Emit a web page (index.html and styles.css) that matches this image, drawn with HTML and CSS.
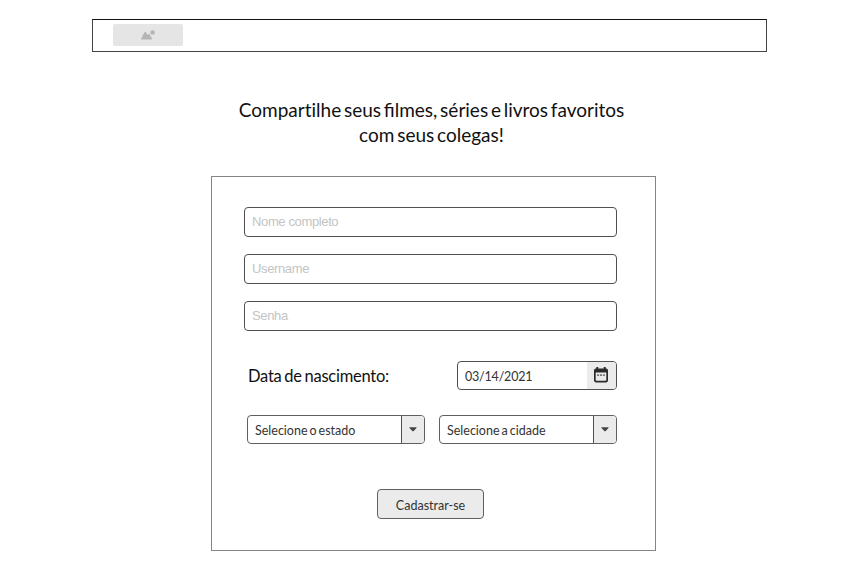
FILE: index.html
```html
<!DOCTYPE html>
<html lang="pt-BR">
<head>
<meta charset="utf-8">
<title>Cadastro</title>
<link rel="stylesheet" href="styles.css">
</head>
<body>
<header class="topbar">
  <div class="logo">
    <svg width="14" height="10" viewBox="0 0 14 10"><path d="M.8 9.6Q-.1 9.6.2 8.6L3.4 2.4Q4.2 1.2 5 2.4L6.6 5l.9-.9Q8 3.7 8.5 4.3l2.4 4.2q.4 1.1-.5 1.1z"/><circle cx="11.6" cy="2.5" r="2.3"/></svg>
  </div>
</header>
<main>
  <h1><span class="plain">Compartilhe</span> seus filmes, séries e livros favoritos<br>com seus colegas!</h1>
  <form class="card">
    <input class="field" type="text" placeholder="Nome completo">
    <input class="field" type="text" placeholder="Username">
    <input class="field" type="password" placeholder="Senha">
    <div class="birth">
      <span class="label">Data de nascimento:</span>
      <div class="control date">
        <span class="value">03/14/2021</span>
        <span class="addon">
          <svg width="14" height="16" viewBox="0 0 14 16"><path class="ink" fill-rule="evenodd" d="M2.3 0h2v1.6h5.4V0h2v1.6h.5Q14 1.6 14 3.4v10.2q0 1.8-1.8 1.8H1.8Q0 15.4 0 13.6V3.4q0-1.8 1.8-1.8h.5zM1.7 5.6v7.3q0 .8.8.8h9q.8 0 .8-.8V5.6z"/><path class="dots" d="M3.1 7.3h2v1.6h-2zM6 7.3h2v1.6H6zM8.9 7.3h2v1.6h-2z"/></svg>
        </span>
      </div>
    </div>
    <div class="places">
      <div class="control select"><span class="value">Selecione o estado</span><span class="addon"><svg width="8" height="5" viewBox="0 0 8 5"><path class="arrow" d="M.8.2h6.4q.8 0 .3.7L4.7 4q-.7.7-1.4 0L.5.9Q0 .2.8.2z"/></svg></span></div>
      <div class="control select"><span class="value">Selecione a cidade</span><span class="addon"><svg width="8" height="5" viewBox="0 0 8 5"><path class="arrow" d="M.8.2h6.4q.8 0 .3.7L4.7 4q-.7.7-1.4 0L.5.9Q0 .2.8.2z"/></svg></span></div>
    </div>
    <button class="submit" type="button">Cadastrar-se</button>
  </form>
</main>
</body>
</html>
```
FILE: styles.css
```css
* { box-sizing: border-box; }
body {
  margin: 0;
  height: 566px;
  overflow: hidden;
  background: #fff;
  color: #111;
  font-family: Lato, sans-serif;
}
svg { display: block; }
.topbar {
  width: 675px;
  height: 33px;
  margin: 19px 0 0 92px;
  padding: 4px 20px;
  border: 1px solid #444;
  border-top-color: #111;
}
.logo {
  display: flex;
  align-items: center;
  justify-content: center;
  width: 70px;
  height: 22px;
  border-radius: 2px;
  background: #e5e5e5;
  fill: #b5b5b5;
}
main {
  width: 445px;
  margin: 45px 0 0 211px;
}
h1 {
  margin: 0 0 29px;
  padding-right: 4px;
  font-size: 19px;
  font-weight: 400;
  line-height: 25px;
  height: 50px;
  word-spacing: -2.1px;
  text-align: center;
  white-space: nowrap;
}
.plain { font-variant-ligatures: none; }
.card {
  display: flex;
  flex-direction: column;
  height: 375px;
  padding: 30px 38px 0 32px;
  border: 1px solid #858585;
}
.field {
  width: 373px;
  height: 30px;
  margin: 0 0 17px;
  padding: 0 7px 1px;
  border: 1px solid #505050;
  border-radius: 4px;
  background: #fff;
  font: 13px/20px "Liberation Sans", Arial, sans-serif;
  letter-spacing: -.37px;
}
.field::placeholder { color: #c4c4c4; opacity: 1; }
.birth {
  display: flex;
  align-items: center;
  justify-content: space-between;
  margin-top: 13px;
  padding-left: 4px;
}
.label { padding-top: 1px; font-size: 16.5px; line-height: 28px; letter-spacing: -.25px; word-spacing: -1.2px; }
.control {
  display: flex;
  height: 29px;
  overflow: hidden;
  border: 1px solid #505050;
  border-radius: 4px;
  color: #333;
  font-size: 12.5px;
  word-spacing: -1.2px;
}
.value {
  flex: 1;
  padding: 1px 0 0 7px;
  line-height: 27px;
  white-space: nowrap;
}
.addon {
  display: flex;
  align-items: center;
  justify-content: center;
  background: #ebebeb;
}
.ink { fill: #2b2b2b; }
.arrow { fill: #444; }
.dots { fill: #777; }
.date { width: 160px; }
.date .value { font-size: 12.5px; letter-spacing: -.2px; }
.date .addon { width: 29px; padding: 0 2px 1px 0; }
.places {
  display: flex;
  justify-content: space-between;
  margin-top: 25px;
  padding-left: 3px;
}
.select { width: 178px; border-color: #606060; }
.select .value { padding-left: 7px; }
.select .addon { width: 23px; padding-right: 1px; border-left: 1px solid #505050; }
.submit {
  width: 107px;
  height: 30px;
  margin: 45px 0 0 133px;
  padding: 3px 0 0;
  border: 1px solid #606060;
  border-radius: 4px;
  background: #ebebeb;
  color: #333;
  font: 12.5px/24px Lato, sans-serif;
}
```
